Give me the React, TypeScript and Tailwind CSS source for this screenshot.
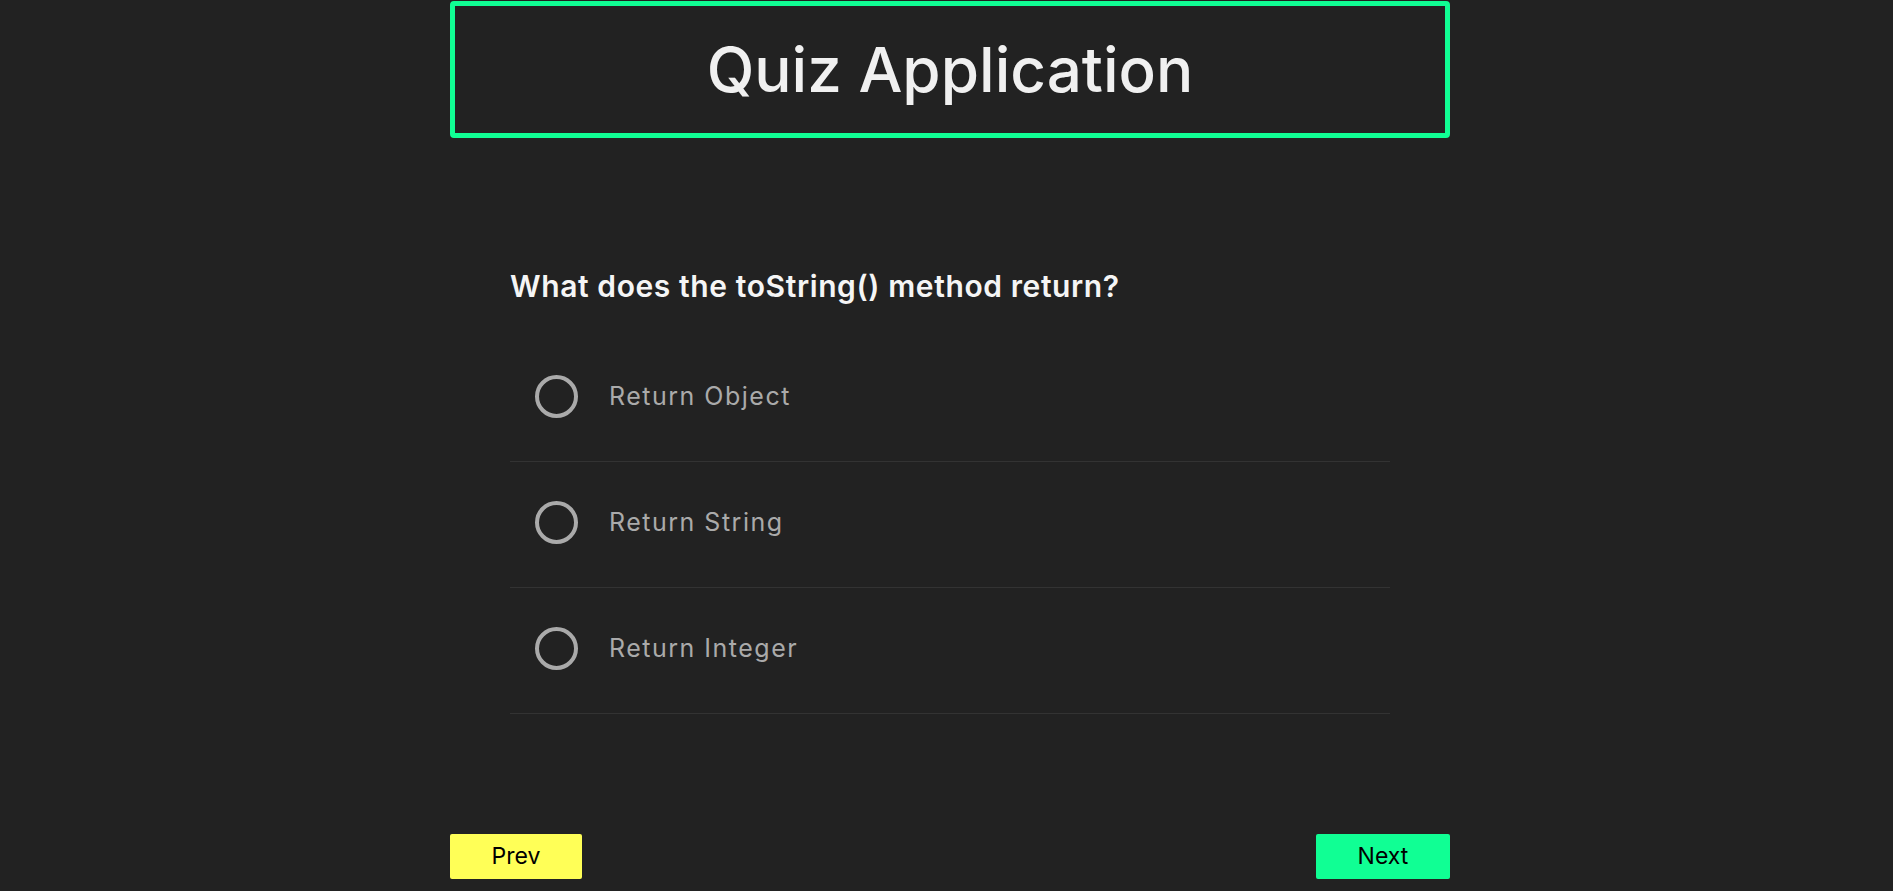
const options = ["Return Object", "Return String", "Return Integer"];

const Option = ({ label }: { label: string }) => {
  return (
    <label className="flex items-center h-[126px] pb-[4px] border-b border-[#333333] cursor-pointer">
      <span className="ml-[25px] w-[43px] h-[43px] rounded-full border-[4px] border-[#aaaaaa] shrink-0" />
      <span className="ml-[31px] text-[25px] tracking-[1.5px] text-[#aaaaaa] font-normal">{label}</span>
    </label>
  );
};

export default function App() {
  return (
    <div
      className="min-h-screen bg-[#222222] text-[#f0f0f0] pl-[7px]"
      style={{ fontFamily: "Inter, 'Noto Sans', sans-serif" }}
    >
      <div className="w-[1000px] mx-auto pt-px">
        <header className="h-[137px] border-[5px] border-[#10ff94] rounded-[4px] flex items-center justify-center">
          <h1 className="text-[62px] font-medium text-[#f0f0f0]">Quiz Application</h1>
        </header>

        <main className="w-[880px] mx-auto mt-[130px]">
          <h2 className="text-[30px] font-semibold leading-[36px] tracking-[0.6px] text-[#f5f5f5]">
            What does the toString() method return?
          </h2>
          <div className="mt-[32px]">
            {options.map((o) => (
              <Option key={o} label={o} />
            ))}
          </div>
        </main>

        <div className="flex justify-between mt-[120px]">
          <button className="w-[132px] h-[45px] bg-[#ffff57] rounded-[2px] text-[23px] text-black">Prev</button>
          <button className="w-[134px] h-[45px] bg-[#10ff94] rounded-[2px] text-[23px] text-black">Next</button>
        </div>
      </div>
    </div>
  );
}
